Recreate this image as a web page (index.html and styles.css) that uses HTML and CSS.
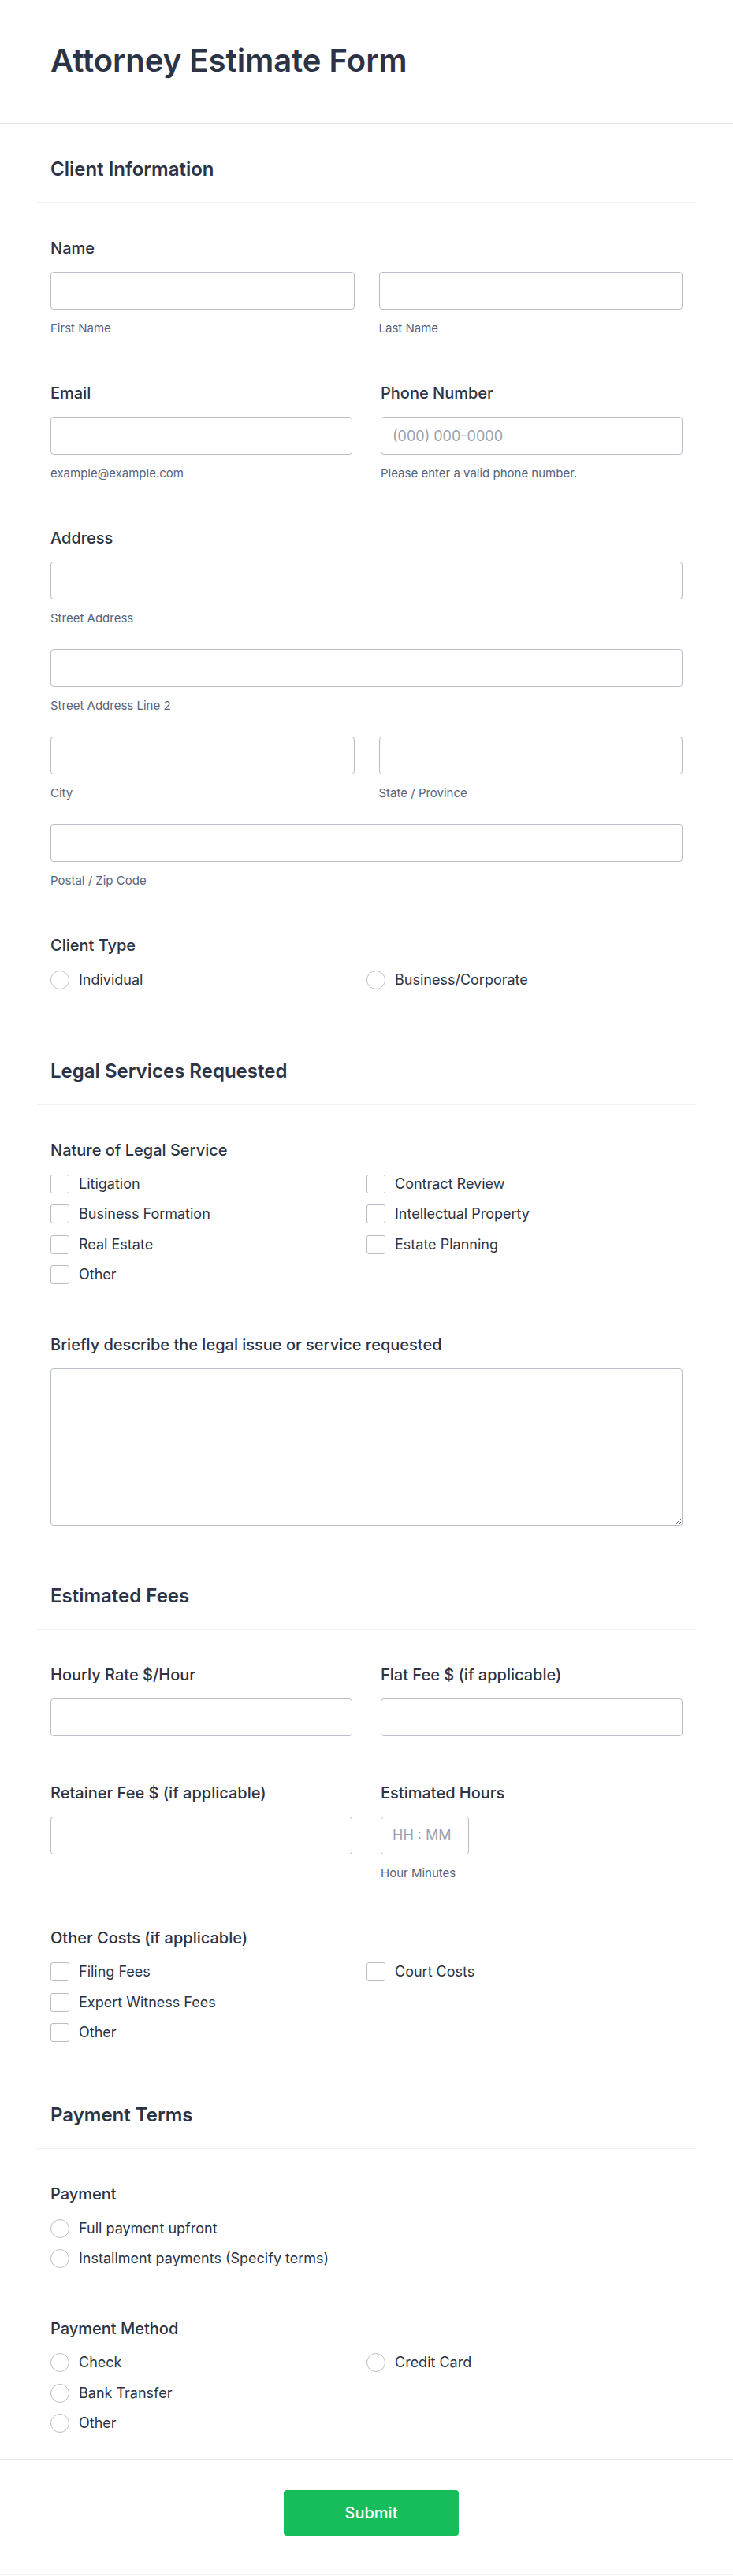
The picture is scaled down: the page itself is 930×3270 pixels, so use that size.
FILE: index.html
```html
<!DOCTYPE html>
<html lang="en">
<head>
    <meta charset="UTF-8">
    <meta name="viewport" content="width=device-width, initial-scale=1.0">
    <title>Attorney Estimate Form</title>
    <link rel="stylesheet" href="styles.css">
</head>
<body>
    <form class="form">
        <header class="form-header">
            <h1>Attorney Estimate Form</h1>
        </header>

        <div class="form-body">
            <!-- Client Information -->
            <section class="form-section">
                <div class="section-head">
                    <h2>Client Information</h2>
                </div>

                <div class="field">
                    <label class="field-label">Name</label>
                    <div class="split">
                        <div>
                            <input class="text-input" type="text">
                            <span class="sublabel">First Name</span>
                        </div>
                        <div>
                            <input class="text-input" type="text">
                            <span class="sublabel">Last Name</span>
                        </div>
                    </div>
                </div>

                <div class="pair">
                    <div class="field">
                        <label class="field-label">Email</label>
                        <input class="text-input" type="email">
                        <span class="sublabel">example@example.com</span>
                    </div>
                    <div class="field">
                        <label class="field-label">Phone Number</label>
                        <input class="text-input" type="tel" placeholder="(000) 000-0000">
                        <span class="sublabel">Please enter a valid phone number.</span>
                    </div>
                </div>

                <div class="field">
                    <label class="field-label">Address</label>
                    <div class="address">
                        <div>
                            <input class="text-input" type="text">
                            <span class="sublabel">Street Address</span>
                        </div>
                        <div>
                            <input class="text-input" type="text">
                            <span class="sublabel">Street Address Line 2</span>
                        </div>
                        <div class="split">
                            <div>
                                <input class="text-input" type="text">
                                <span class="sublabel">City</span>
                            </div>
                            <div>
                                <input class="text-input" type="text">
                                <span class="sublabel">State / Province</span>
                            </div>
                        </div>
                        <div>
                            <input class="text-input" type="text">
                            <span class="sublabel">Postal / Zip Code</span>
                        </div>
                    </div>
                </div>

                <div class="field field-choice field-end-lg">
                    <label class="field-label">Client Type</label>
                    <div class="options options-2col">
                        <label class="option"><input type="radio" name="client_type"> Individual</label>
                        <label class="option"><input type="radio" name="client_type"> Business/Corporate</label>
                    </div>
                </div>
            </section>

            <!-- Legal Services Requested -->
            <section class="form-section">
                <div class="section-head">
                    <h2>Legal Services Requested</h2>
                </div>

                <div class="field field-choice">
                    <label class="field-label">Nature of Legal Service</label>
                    <div class="options options-2col">
                        <label class="option"><input type="checkbox"> Litigation</label>
                        <label class="option"><input type="checkbox"> Contract Review</label>
                        <label class="option"><input type="checkbox"> Business Formation</label>
                        <label class="option"><input type="checkbox"> Intellectual Property</label>
                        <label class="option"><input type="checkbox"> Real Estate</label>
                        <label class="option"><input type="checkbox"> Estate Planning</label>
                        <label class="option option-other"><input type="checkbox"> Other</label>
                    </div>
                </div>

                <div class="field field-end-sm">
                    <label class="field-label">Briefly describe the legal issue or service requested</label>
                    <textarea class="text-area"></textarea>
                </div>
            </section>

            <!-- Estimated Fees -->
            <section class="form-section">
                <div class="section-head">
                    <h2>Estimated Fees</h2>
                </div>

                <div class="pair">
                    <div class="field">
                        <label class="field-label">Hourly Rate $/Hour</label>
                        <input class="text-input" type="text">
                    </div>
                    <div class="field">
                        <label class="field-label">Flat Fee $ (if applicable)</label>
                        <input class="text-input" type="text">
                    </div>
                </div>

                <div class="pair">
                    <div class="field">
                        <label class="field-label">Retainer Fee $ (if applicable)</label>
                        <input class="text-input" type="text">
                    </div>
                    <div class="field">
                        <label class="field-label">Estimated Hours</label>
                        <input class="text-input time-input" type="text" placeholder="HH : MM">
                        <span class="sublabel">Hour Minutes</span>
                    </div>
                </div>

                <div class="field field-choice">
                    <label class="field-label">Other Costs (if applicable)</label>
                    <div class="options options-2col">
                        <label class="option"><input type="checkbox"> Filing Fees</label>
                        <label class="option"><input type="checkbox"> Court Costs</label>
                        <label class="option"><input type="checkbox"> Expert Witness Fees</label>
                        <label class="option option-other"><input type="checkbox"> Other</label>
                    </div>
                </div>
            </section>

            <!-- Payment Terms -->
            <section class="form-section">
                <div class="section-head">
                    <h2>Payment Terms</h2>
                </div>

                <div class="field field-choice">
                    <label class="field-label">Payment</label>
                    <div class="options">
                        <label class="option"><input type="radio" name="payment"> Full payment upfront</label>
                        <label class="option"><input type="radio" name="payment"> Installment payments (Specify terms)</label>
                    </div>
                </div>

                <div class="field field-choice">
                    <label class="field-label">Payment Method</label>
                    <div class="options options-2col">
                        <label class="option"><input type="radio" name="method"> Check</label>
                        <label class="option"><input type="radio" name="method"> Credit Card</label>
                        <label class="option"><input type="radio" name="method"> Bank Transfer</label>
                        <label class="option option-other"><input type="radio" name="method"> Other</label>
                    </div>
                </div>
            </section>
        </div>

        <div class="form-footer">
            <button type="submit" class="submit-button">Submit</button>
        </div>
    </form>
</body>
</html>
```

FILE: styles.css
```css
* {
    box-sizing: border-box;
}

body {
    margin: 0;
    background: #fff;
    font-family: "Inter", "Noto Sans", sans-serif;
    color: #2c3345;
}

h1, h2 {
    margin: 0;
}

.form-header {
    padding: 53px 64px 55px;
    border-bottom: 1px solid #e1e2e8;
}
.form-header h1 {
    font-size: 40px;
    line-height: 48px;
    font-weight: 600;
}

.form-body {
    padding: 0 47px;
}

.section-head {
    padding: 43px 17px 27px;
    margin-bottom: 44px;
    border-bottom: 1px solid #f1f2f6;
}
.section-head h2 {
    font-size: 24px;
    line-height: 30px;
    font-weight: 600;
}

.field {
    padding: 0 17px;
    margin-bottom: 59px;
}
.field-choice {
    margin-bottom: 64px;
}
.form-section > .field:last-child {
    margin-bottom: 35px;
}
.form-section > .field-end-lg:last-child {
    margin-bottom: 46px;
}
.form-section > .field-end-sm:last-child {
    margin-bottom: 31px;
}
.form-section:last-child > .field:last-child {
    margin-bottom: 34px;
}

.field-label {
    display: block;
    font-size: 20px;
    line-height: 26px;
    font-weight: 500;
    margin-bottom: 17px;
}

/* two fields side by side */
.pair {
    display: grid;
    grid-template-columns: 1fr 1fr;
    column-gap: 2px;
}

.split {
    display: grid;
    grid-template-columns: 1fr 1fr;
    gap: 31px;
}
.address {
    display: flex;
    flex-direction: column;
    gap: 29px;
}

.text-input {
    display: block;
    width: 100%;
    height: 48px;
    padding: 0 14px;
    border: 1px solid #b8bdc9;
    border-radius: 4px;
    background: #fff;
    font-family: inherit;
    font-size: 18px;
    color: #2c3345;
}
.text-input::placeholder {
    color: #9ba1b0;
}
.time-input {
    width: 112px;
}

.text-area {
    display: block;
    width: 100%;
    height: 200px;
    border: 1px solid #b8bdc9;
    border-radius: 4px;
    font-family: inherit;
    font-size: 18px;
    resize: vertical;
}

.sublabel {
    display: block;
    margin-top: 14px;
    font-size: 15px;
    line-height: 20px;
    color: #57647e;
}

.options {
    display: grid;
    row-gap: 14.33px;
    padding-top: 1.5px;
}
.options-2col {
    grid-template-columns: 1fr 1fr;
}
.option-other {
    grid-column: 1 / -1;
}

.option {
    display: flex;
    align-items: center;
    gap: 12px;
    height: 24px;
    font-size: 18px;
    line-height: 24px;
    color: #2c3345;
}
.option input {
    appearance: none;
    -webkit-appearance: none;
    flex: none;
    width: 24px;
    height: 24px;
    margin: 0;
    border: 1px solid #b8bdc9;
    background: #fff;
}
.option input[type="checkbox"] {
    border-radius: 3px;
}
.option input[type="radio"] {
    border-radius: 50%;
}

.form-footer {
    border-top: 1px solid #e6e8ee;
    border-bottom: 1px solid #f3f4f7;
    padding: 38px 0 49px 12px;
    text-align: center;
}
.submit-button {
    width: 222px;
    height: 58px;
    border: none;
    border-radius: 4px;
    background: #18bd5b;
    color: #fff;
    font-family: inherit;
    font-size: 20px;
    font-weight: 500;
    cursor: pointer;
}
```
